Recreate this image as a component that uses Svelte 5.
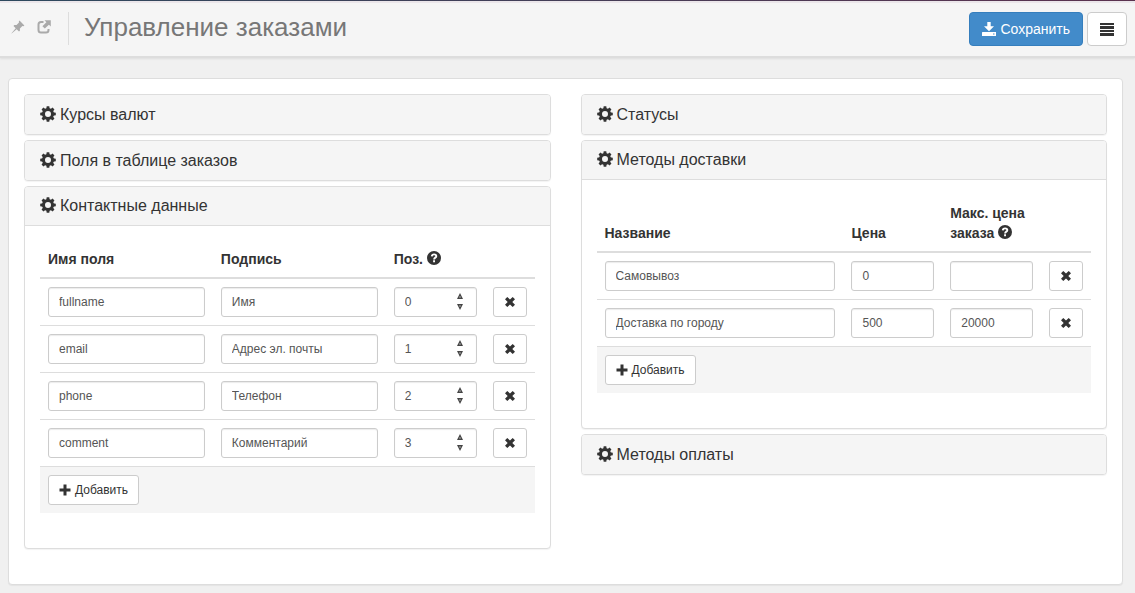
<script>
  let fields = $state([
    { name: 'fullname', label: 'Имя', pos: 0 },
    { name: 'email', label: 'Адрес эл. почты', pos: 1 },
    { name: 'phone', label: 'Телефон', pos: 2 },
    { name: 'comment', label: 'Комментарий', pos: 3 }
  ]);
  let methods = $state([
    { title: 'Самовывоз', price: '0', max: '' },
    { title: 'Доставка по городу', price: '500', max: '20000' }
  ]);
  let open = $state({ contacts: true, delivery: true });

  const toggle = (key) => (open[key] = !open[key]);
  const addField = () => fields.push({ name: '', label: '', pos: fields.length });
  const addMethod = () => methods.push({ title: '', price: '', max: '' });
</script>

{#snippet cog()}
  <svg class="cog" viewBox="0 0 16 16" aria-hidden="true">
    <g fill="currentColor">
      <path fill-rule="evenodd" d="M8 2a6 6 0 1 0 0 12A6 6 0 0 0 8 2zm0 3a3 3 0 1 1 0 6 3 3 0 0 1 0-6z" />
      {#each [0, 45, 90, 135, 180, 225, 270, 315] as a}
        <path d="M6.300 3 6.700.2h2.600L9.700 3z" transform="rotate({a} 8 8)" />
      {/each}
    </g>
  </svg>
{/snippet}

{#snippet cross()}
  <svg class="small-icon" viewBox="0 0 12 12" aria-hidden="true">
    <path fill="currentColor" d="M3.300 1 6 3.600 8.700 1 11 3.200 8.300 6 11 8.800 8.700 11 6 8.400 3.300 11 1 8.800 3.700 6 1 3.200z" />
  </svg>
{/snippet}

{#snippet plus()}
  <svg class="small-icon" viewBox="0 0 12 12" aria-hidden="true">
    <path fill="currentColor" d="M4.500.5h3v4h4v3h-4v4h-3v-4h-4v-3h4z" />
  </svg>
{/snippet}

{#snippet help()}
  <svg class="help" viewBox="0 0 14 14" role="img" aria-label="?">
    <circle cx="7" cy="7" r="7" fill="currentColor" />
    <path d="M4.800 5.400C4.900 4 5.800 3.400 7.100 3.400c1.300 0 2.200.7 2.200 1.800C9.300 6.700 7.100 6.600 7.100 8.400" fill="none" stroke="#fff" stroke-width="1.900" />
    <path fill="#fff" d="M6.100 9.300H8V11.200H6.100z" />
  </svg>
{/snippet}

{#snippet heading(title, key)}
  <h4 class="panel-heading">
    <button type="button" onclick={() => toggle(key)}>{@render cog()}{title}</button>
  </h4>
{/snippet}

<div class="navline"></div>
<header>
  <div class="tools">
    <a href="#pin" aria-label="Закрепить">
      <svg viewBox="0 0 14 14"><path fill="currentColor" d="M8.500.6 13.400 5.500 12.400 6.200 11.400 6 8.900 8.500 8.900 10.800 8 11.500 5.700 9.200.6 13.400.5 13.300 4.700 8.200 2.500 6 3.300 5.100 5.500 5.100 8 2.600 7.800 1.500z" /></svg>
    </a>
    <a href="#window" aria-label="Открыть в новом окне">
      <svg viewBox="0 0 14 14">
        <path fill="none" stroke="currentColor" stroke-width="2" d="M6.500 2H4Q1.500 2 1.500 4.500v5.500q0 2.500 2.500 2.500h5q2.500 0 2.500-2.500V9" />
        <path fill="currentColor" d="M7.500.2H13.800V6.500L11.900 4.700 7.800 8.600 5.400 6.200 9.400 2.200z" />
      </svg>
    </a>
  </div>
  <h1>Управление заказами</h1>
  <div class="actions">
    <button type="button" class="btn primary">
      <svg viewBox="0 0 14 14" aria-hidden="true"><path fill="currentColor" d="M5.300 0h3.400v4.300H12L7 9.300 2 4.300h3.300z" /><path fill="currentColor" fill-rule="evenodd" d="M.5 10H14v4H0v-3.500zM11 11.500v1h1.500v-1z" /></svg>
      Сохранить
    </button>
    <button type="button" class="btn menu" aria-label="Меню">
      <svg viewBox="0 0 14 14" aria-hidden="true"><path fill="currentColor" d="M0 1h14v2H0zM0 4h14v3H0zM0 8h14v2H0zM0 11h14v3H0z" /></svg>
    </button>
  </div>
</header>

<main>
  <div class="column">
    <section class="panel">{@render heading('Курсы валют', 'rates')}</section>
    <section class="panel">{@render heading('Поля в таблице заказов', 'columns')}</section>
    <section class="panel" class:open={open.contacts}>
      {@render heading('Контактные данные', 'contacts')}
      {#if open.contacts}
        <div class="panel-body">
          <table>
            <colgroup><col class="wide" /><col class="wide" /><col class="narrow" /><col class="remove" /></colgroup>
            <thead>
              <tr><th>Имя поля</th><th>Подпись</th><th>Поз. {@render help()}</th><th></th></tr>
            </thead>
            <tbody>
              {#each fields as field, i}
                <tr>
                  <td><input type="text" aria-label="Имя поля" bind:value={field.name} /></td>
                  <td><input type="text" aria-label="Подпись" bind:value={field.label} /></td>
                  <td>
                    <div class="number">
                      <input type="number" min="0" aria-label="Поз." bind:value={field.pos} />
                      <span class="spin">
                        <button type="button" tabindex="-1" aria-label="Больше" onclick={() => field.pos++}>
                          <svg viewBox="0 0 8 8"><path d="M4 1 7 7H1z" fill="#444" /><path d="M4 4v2" stroke="#aaa" /></svg>
                        </button>
                        <button type="button" tabindex="-1" aria-label="Меньше" onclick={() => field.pos--}>
                          <svg viewBox="0 0 8 8"><path d="M4 7 7 1H1z" fill="#444" /><path d="M4 2v2" stroke="#aaa" /></svg>
                        </button>
                      </span>
                    </div>
                  </td>
                  <td><button type="button" class="btn sm" aria-label="Удалить" onclick={() => fields.splice(i, 1)}>{@render cross()}</button></td>
                </tr>
              {/each}
            </tbody>
            <tfoot>
              <tr><td colspan="4"><button type="button" class="btn sm" onclick={addField}>{@render plus()} Добавить</button></td></tr>
            </tfoot>
          </table>
        </div>
      {/if}
    </section>
  </div>

  <div class="column">
    <section class="panel">{@render heading('Статусы', 'statuses')}</section>
    <section class="panel" class:open={open.delivery}>
      {@render heading('Методы доставки', 'delivery')}
      {#if open.delivery}
        <div class="panel-body">
          <table>
            <colgroup><col class="title" /><col class="narrow" /><col class="narrow" /><col class="remove" /></colgroup>
            <thead>
              <tr><th>Название</th><th>Цена</th><th>Макс. цена заказа {@render help()}</th><th></th></tr>
            </thead>
            <tbody>
              {#each methods as method, i}
                <tr>
                  <td><input type="text" aria-label="Название" bind:value={method.title} /></td>
                  <td><input type="text" aria-label="Цена" bind:value={method.price} /></td>
                  <td><input type="text" aria-label="Макс. цена заказа" bind:value={method.max} /></td>
                  <td><button type="button" class="btn sm" aria-label="Удалить" onclick={() => methods.splice(i, 1)}>{@render cross()}</button></td>
                </tr>
              {/each}
            </tbody>
            <tfoot>
              <tr><td colspan="4"><button type="button" class="btn sm" onclick={addMethod}>{@render plus()} Добавить</button></td></tr>
            </tfoot>
          </table>
        </div>
      {/if}
    </section>
    <section class="panel">{@render heading('Методы оплаты', 'payment')}</section>
  </div>
</main>

<style>
  :global(body) {
    margin: 0;
    background: #f0f0f0;
    color: #333;
    font: 14px/20px "Liberation Sans", Arial, sans-serif;
  }
  :global(*) {
    box-sizing: border-box;
  }
  button,
  input {
    font-family: inherit;
  }
  svg {
    display: inline-block;
    flex: none;
  }
  .navline {
    height: 1px;
    background: linear-gradient(to right, #2e4a5f, #5c3350);
  }
  header {
    display: flex;
    align-items: center;
    height: 57px;
    padding: 0 8px 2px 11px;
    background: #f5f5f5;
    border-top: 2px solid #ebe6ea;
    border-bottom: 2px solid #ddd;
    box-shadow: 0 1px 2px rgba(0, 0, 0, 0.08);
  }
  .tools {
    display: flex;
    align-items: center;
    gap: 12px;
    height: 33px;
    padding: 0 17px 4px 0;
    border-right: 1px solid #ddd;
  }
  .tools a {
    display: flex;
    color: #aaa;
  }
  .tools svg {
    width: 14px;
    height: 14px;
  }
  h1 {
    margin: 0;
    padding: 0 0 4px 15px;
    color: #777;
    font-size: 26px;
    font-weight: 400;
    line-height: 32px;
  }
  .actions {
    display: flex;
    gap: 4px;
    margin-left: auto;
  }
  .btn {
    display: flex;
    align-items: center;
    gap: 4px;
    height: 34px;
    padding: 0 12px;
    border: 1px solid #ccc;
    border-radius: 4px;
    background: #fff;
    color: #333;
    font-size: 14px;
    line-height: 20px;
    cursor: pointer;
  }
  .btn svg {
    width: 14px;
    height: 14px;
  }
  .btn.primary {
    border-color: #357ebd;
    background: #428bca;
    color: #fff;
  }
  .btn.sm {
    height: 30px;
    padding: 0 10px;
    border-radius: 3px;
    font-size: 12px;
    line-height: 18px;
  }
  .btn .small-icon {
    width: 12px;
    height: 12px;
  }
  main {
    display: grid;
    grid-template-columns: 1fr 1fr;
    gap: 30px;
    align-items: start;
    margin: 20px 12px 8px 8px;
    padding: 15px 15px 35px;
    border: 1px solid #ddd;
    border-radius: 4px;
    background: #fff;
    box-shadow: 0 1px 1px rgba(0, 0, 0, 0.05);
  }
  .column {
    display: flex;
    flex-direction: column;
    gap: 5px;
    min-width: 0;
  }
  .panel {
    border: 1px solid #ddd;
    border-radius: 4px;
    background: #fff;
    box-shadow: 0 1px 1px rgba(0, 0, 0, 0.05);
  }
  .panel-heading {
    margin: 0;
    border-radius: 3px;
    background: #f5f5f5;
    font-size: 16px;
    font-weight: 400;
    line-height: 19px;
  }
  .panel.open .panel-heading {
    border-bottom: 1px solid #ddd;
    border-radius: 3px 3px 0 0;
    line-height: 18px;
  }
  .panel-heading button {
    display: flex;
    align-items: center;
    gap: 4px;
    width: 100%;
    padding: 10px 15px;
    border: 0;
    background: none;
    color: inherit;
    font-size: inherit;
    line-height: inherit;
    text-align: left;
    cursor: pointer;
  }
  .cog {
    width: 16px;
    height: 16px;
    margin-bottom: 2px;
  }
  .panel-body {
    padding: 15px 15px 35px;
  }
  table {
    width: 100%;
    table-layout: fixed;
    border-collapse: separate;
    border-spacing: 0;
  }
  .wide {
    width: 35%;
  }
  .title {
    width: 50%;
  }
  .narrow {
    width: 20%;
  }
  .remove {
    width: 50px;
  }
  th,
  td {
    padding: 8px;
    text-align: left;
  }
  th {
    border-bottom: 2px solid #ddd;
    font-size: 14px;
    line-height: 20px;
    vertical-align: bottom;
  }
  td {
    border-top: 1px solid #ddd;
    vertical-align: top;
  }
  tbody tr:first-child td {
    border-top: 0;
  }
  tfoot td {
    background: #f5f5f5;
  }
  .help {
    width: 14px;
    height: 14px;
    vertical-align: -1px;
  }
  input {
    display: block;
    width: 100%;
    height: 30px;
    margin: 0;
    padding: 0 10px;
    border: 1px solid #ccc;
    border-radius: 3px;
    background: #fff;
    box-shadow: inset 0 1px 1px rgba(0, 0, 0, 0.08);
    color: #555;
    font-size: 12px;
    line-height: 18px;
  }
  input[type='number'] {
    appearance: textfield;
    -moz-appearance: textfield;
  }
  input[type='number']::-webkit-inner-spin-button {
    appearance: none;
    margin: 0;
  }
  .number {
    position: relative;
  }
  .spin {
    position: absolute;
    top: 5px;
    right: 13px;
    display: flex;
    flex-direction: column;
    gap: 3px;
  }
  .spin button {
    display: flex;
    padding: 0;
    border: 0;
    background: none;
  }
  .spin svg {
    width: 8px;
    height: 8px;
  }
</style>
